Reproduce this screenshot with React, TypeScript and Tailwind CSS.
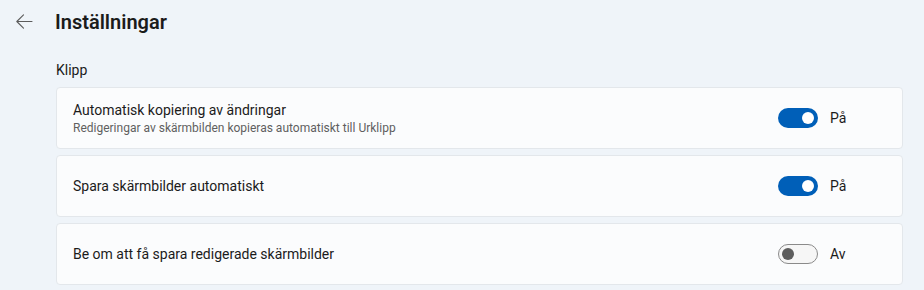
import React, { useState } from "react";

type Row = { title: string; desc?: string; on: boolean };

const ROWS: Row[] = [
  {
    title: "Automatisk kopiering av ändringar",
    desc: "Redigeringar av skärmbilden kopieras automatiskt till Urklipp",
    on: true,
  },
  { title: "Spara skärmbilder automatiskt", on: true },
  { title: "Be om att få spara redigerade skärmbilder", on: false },
];

function Toggle({ on, onClick }: { on: boolean; onClick: () => void }) {
  return (
    <button
      onClick={onClick}
      className={`flex h-5 w-10 items-center rounded-full ${
        on
          ? "justify-end bg-[#005fb8] px-[4px]"
          : "justify-start border border-[#8a8a8a] bg-[#f6f6f6] px-[3px]"
      }`}
    >
      <span
        className={`block rounded-full ${
          on ? "h-3 w-3 bg-white" : "h-3 w-3 bg-[#5d5d5d]"
        }`}
      />
    </button>
  );
}

export default function App() {
  const [rows, setRows] = useState(ROWS);

  return (
    <div
      className="h-[290px] w-[924px] overflow-hidden bg-[#eff4f9] text-[#1b1b1b]"
      style={{ fontFamily: 'Roboto, "Noto Sans", sans-serif' }}
    >
      {/* header */}
      <div className="flex h-[42px] items-center pt-[1px]">
        <svg width="48" height="42" viewBox="0 0 48 42" className="shrink-0">
          <path
            d="M32 20.5H16.8M23.5 13.8L16.8 20.5L23.5 27.2"
            fill="none"
            stroke="#5c5c5c"
            strokeWidth="1.1"
            strokeLinecap="round"
            strokeLinejoin="round"
          />
        </svg>
        <h1 className="ml-[7px] text-[20px] font-semibold leading-none">Inställningar</h1>
      </div>

      <div className="ml-[56px] mr-[21px]">
        <p className="mt-[18px] text-[14px] leading-5">Klipp</p>

        <div className="mt-[7px] flex flex-col gap-[6px]">
          {rows.map((r, i) => (
            <div
              key={r.title}
              className="flex h-[62px] items-center rounded-[4px] border border-[#e3e7eb] bg-[#fbfcfd] pl-4 pr-[52px]"
            >
              <div className="flex-1">
                <p className="text-[14px] leading-5">{r.title}</p>
                {r.desc && (
                  <p className="text-[12px] leading-4 text-[#5f5f5f]">{r.desc}</p>
                )}
              </div>
              <Toggle
                on={r.on}
                onClick={() =>
                  setRows(rows.map((x, j) => (j === i ? { ...x, on: !x.on } : x)))
                }
              />
              <span className="ml-3 w-[20px] text-[14px]">{r.on ? "På" : "Av"}</span>
            </div>
          ))}
        </div>
      </div>
    </div>
  );
}
